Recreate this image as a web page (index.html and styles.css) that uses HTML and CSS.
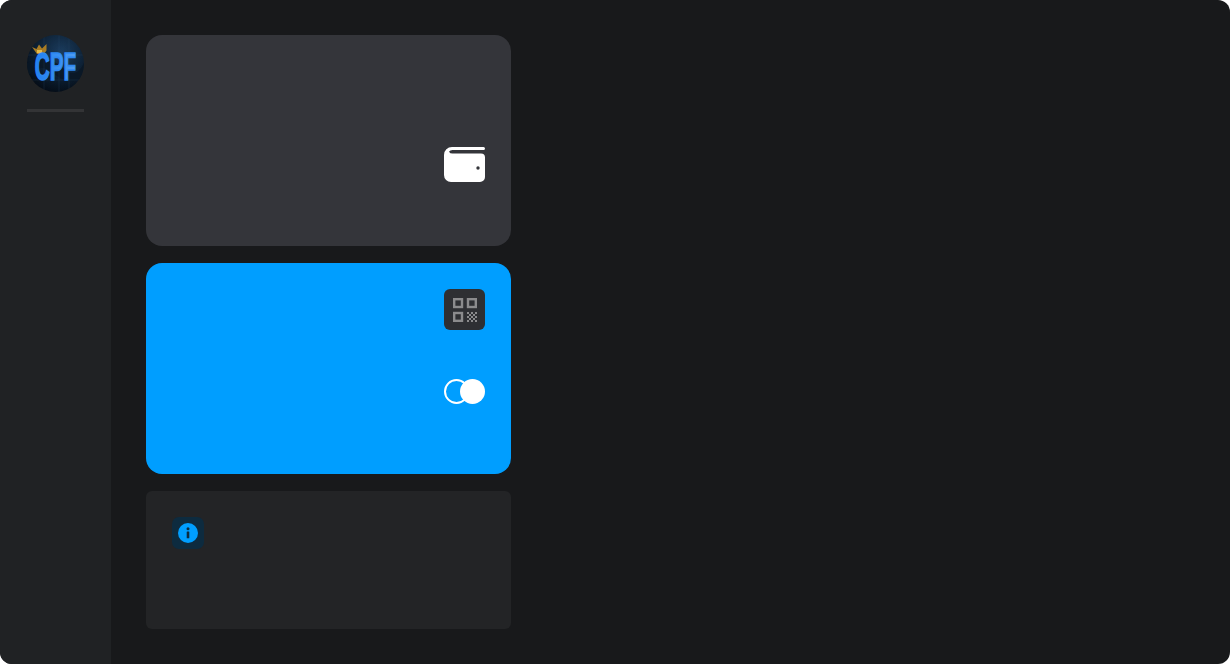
FILE: index.html
```html
<!DOCTYPE html>
<html lang="en">
<head>
<meta charset="utf-8">
<title>CPF Wallet</title>
<link rel="stylesheet" href="styles.css">
</head>
<body>
<div class="app">
  <aside class="sidebar">
    <div class="logo">
      <svg viewBox="0 0 57 57" width="57" height="57">
        <defs>
          <radialGradient id="bg" cx="0.6" cy="0.3" r="0.75">
            <stop offset="0" stop-color="#1b3c5e"/>
            <stop offset="0.55" stop-color="#0e2236"/>
            <stop offset="1" stop-color="#050c15"/>
          </radialGradient>
          <linearGradient id="txt" x1="0" x2="1" y1="0" y2="0">
            <stop offset="0" stop-color="#1f80f2"/>
            <stop offset="1" stop-color="#4f9df2"/>
          </linearGradient>
          <clipPath id="disc"><circle cx="28.5" cy="28.5" r="28.5"/></clipPath>
        </defs>
        <circle cx="28.5" cy="28.5" r="28.5" fill="url(#bg)"/>
        <g clip-path="url(#disc)">
          <path d="M0 28C14 20 26 24 36 33S52 38 57 28V42C46 50 36 46 26 38S10 32 0 42Z" fill="#0a1826" opacity=".8"/>
          <path d="M32 0V57M42 0V57M17 0V57M0 45H57M0 20H57" stroke="#2b4a68" stroke-width=".5" opacity=".5"/>
        </g>
        <path d="M5 12L9.500 14L12 9.500L15 13.500L19.500 9L19.500 15.500L17 19H10Z" fill="#a87c24"/>
        <path d="M10 15H15V18H10Z" fill="#e2bb4a"/>
        <g transform="translate(28.500 44.700) scale(.53 1)">
          <text class="logo-text" text-anchor="middle" fill="url(#txt)" stroke="#2d88f2" stroke-width="1.600">CPF</text>
        </g>
      </svg>
    </div>
    <div class="divider"></div>
  </aside>
  <main class="main">
    <section class="card card-dark">
      <svg class="wallet" viewBox="0 0 41 35" width="41" height="35">
        <path d="M0 8A8 8 0 0 1 8 0H39.500A1.500 1.500 0 0 1 39.500 3H8.500Q6 3 5 4.700Q6 6.600 8.500 6.600H37A4 4 0 0 1 41 10.600V30A5 5 0 0 1 36 35H7A7 7 0 0 1 0 28Z" fill="#fff"/>
        <circle cx="34" cy="21" r="1.700" fill="#34353a"/>
      </svg>
    </section>
    <section class="card card-blue">
      <div class="qr-button">
        <svg viewBox="0 0 24 24" width="24" height="24">
          <g fill="none" stroke="#8b8b8d" stroke-width="2.400">
            <rect x="1.200" y="1.200" width="7.800" height="7.800"/>
            <rect x="15" y="1.200" width="7.800" height="7.800"/>
            <rect x="1.200" y="15" width="7.800" height="7.800"/>
          </g>
          <path d="M14 14h2v2h-2zM18 14h2v2h-2zM22 14h2v2h-2zM16 16h2v2h-2zM20 16h2v2h-2zM14 18h2v2h-2zM18 18h2v2h-2zM22 18h2v2h-2zM16 20h2v2h-2zM20 20h2v2h-2zM14 22h2v2h-2zM18 22h2v2h-2zM22 22h2v2h-2z" fill="#8b8b8d"/>
        </svg>
      </div>
      <svg class="toggle" viewBox="0 0 41 25" width="41" height="25">
        <circle cx="12.500" cy="12.500" r="11.500" fill="none" stroke="#fff" stroke-width="2"/>
        <circle cx="28.500" cy="12.500" r="12.500" fill="#fff"/>
      </svg>
    </section>
    <section class="card-info">
      <div class="info-button">
        <svg viewBox="0 0 20 20" width="20" height="20">
          <circle cx="10" cy="10" r="10" fill="#009eff"/>
          <circle cx="10" cy="5.800" r="1.500" fill="#0d2b3f"/>
          <rect x="8.700" y="8.500" width="2.600" height="6.800" rx=".5" fill="#0d2b3f"/>
        </svg>
      </div>
    </section>
  </main>
</div>
</body>
</html>
```

FILE: styles.css
```css
html, body {
  margin: 0;
  padding: 0;
  height: 100%;
  background: #fff;
}

.app {
  display: flex;
  width: 1230px;
  height: 664px;
  border-radius: 12px;
  overflow: hidden;
  background: #18191b;
}

.sidebar {
  box-sizing: border-box;
  width: 111px;
  flex: none;
  padding: 35px 27px 0;
  background: #202224;
}

.logo {
  height: 57px;
}

.logo svg {
  display: block;
}

.logo-text {
  font-family: "Liberation Sans", Arial, sans-serif;
  font-weight: 700;
  font-size: 39px;
}

.divider {
  height: 3px;
  margin-top: 17px;
  background: #333436;
}

.main {
  display: flex;
  flex-direction: column;
  gap: 17px;
  padding: 35px;
}

.card {
  box-sizing: border-box;
  display: flex;
  flex-direction: column;
  align-items: flex-end;
  width: 365px;
  height: 211px;
  padding-right: 26px;
  border-radius: 16px;
}

.card-dark {
  justify-content: flex-start;
  padding-top: 112px;
  background: #34353a;
}

.card-blue {
  padding-top: 26px;
  gap: 49px;
  background: #009eff;
}

.wallet,
.toggle {
  display: block;
}

.qr-button {
  display: flex;
  align-items: center;
  justify-content: center;
  width: 41px;
  height: 41px;
  border-radius: 6px;
  background: #2e2f33;
}

.card-info {
  box-sizing: border-box;
  width: 365px;
  height: 138px;
  padding: 26px;
  border-radius: 6px;
  background: #232426;
}

.info-button {
  display: flex;
  align-items: center;
  justify-content: center;
  width: 32px;
  height: 32px;
  border-radius: 7px;
  background: #0d2b3f;
}
```
